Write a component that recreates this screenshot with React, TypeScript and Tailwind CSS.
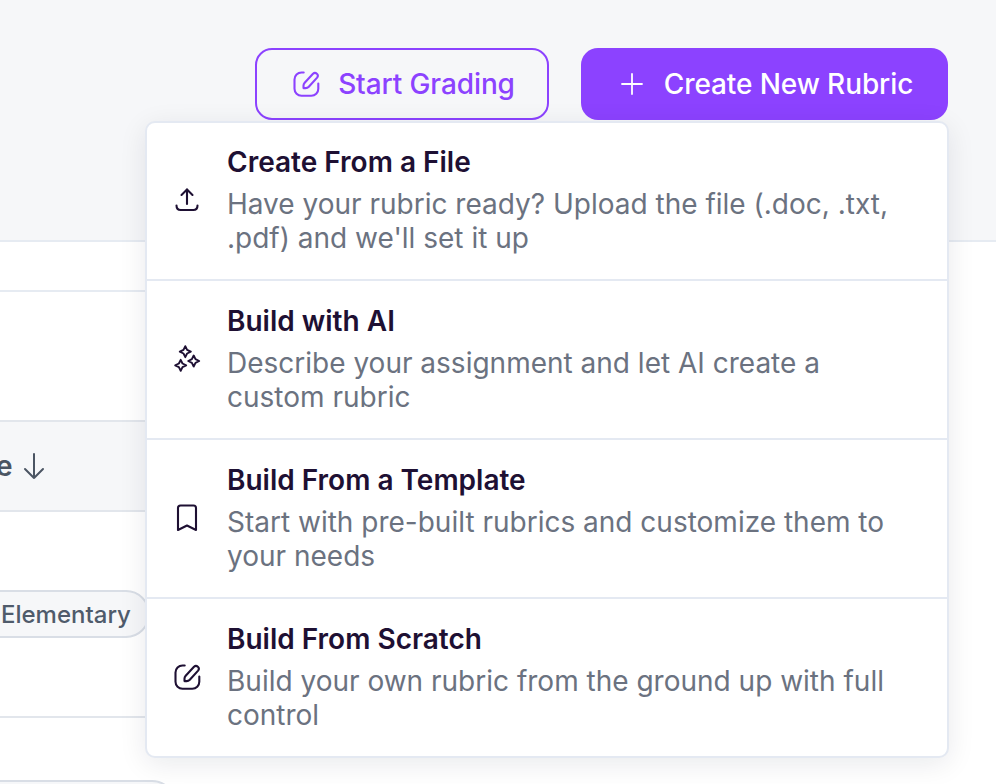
const PencilSquare = ({ className }: { className: string }) => (
  <svg viewBox="0 0 28 28" fill="none" stroke="currentColor" strokeWidth="2.100" strokeLinecap="round" strokeLinejoin="round" className={className}>
    <path d="M11.700 2.500H9.500a7 7 0 0 0-7 7v9.200a7 7 0 0 0 7 7h9.800a7 7 0 0 0 7-7V13.500" />
    <path d="M11.500 15.500c0-1 .5-2 1.200-2.800L21 3.800a2.800 2.800 0 0 1 4.100 3.800l-8.300 9.200c-.8.8-2 1.300-3.200 1.300h-2.100z" />
  </svg>
);

const UploadIcon = () => (
  <svg viewBox="0 0 26 26" fill="none" stroke="currentColor" strokeWidth="2.100" strokeLinecap="round" strokeLinejoin="round" className="h-[26px] w-[26px]">
    <path d="M13 17V2.500" />
    <path d="M7.500 8L13 2.500 18.500 8" />
    <path d="M2.500 18.500c0 2.800 1.700 4.500 4.200 4.500h12.600c2.500 0 4.200-1.700 4.200-4.500" />
  </svg>
);

const SparkIcon = () => (
  <svg viewBox="0 0 28 28" fill="none" stroke="currentColor" strokeWidth="1.900" strokeLinejoin="round" className="h-[28px] w-[28px]">
    <path d="M12.300 1.200l1.800 3.700 3.700 1.800-3.700 1.800-1.800 3.700-1.800-3.700-3.700-1.800 3.700-1.800z" />
    <path d="M20.700 10.500l1.800 3.700 3.700 1.800-3.700 1.800-1.800 3.700-1.800-3.700-3.700-1.800 3.700-1.800z" />
    <path d="M7.700 14.800l1.800 3.700 3.700 1.800-3.700 1.800-1.800 3.700-1.800-3.700-3.700-1.800 3.700-1.800z" />
  </svg>
);

const BookmarkIcon = () => (
  <svg viewBox="0 0 26 28" fill="none" stroke="currentColor" strokeWidth="2.100" strokeLinecap="round" strokeLinejoin="round" className="h-[28px] w-[26px]">
    <path d="M4 26V4a2.500 2.500 0 0 1 2.500-2.500h13A2.500 2.500 0 0 1 22 4v22l-9-4.500z" />
  </svg>
);

const items = [
  { title: "Create From a File", desc: "Have your rubric ready? Upload the file (.doc, .txt, .pdf) and we'll set it up", icon: <UploadIcon />, h: "h-[156px]" },
  { title: "Build with AI", desc: "Describe your assignment and let AI create a custom rubric", icon: <SparkIcon />, h: "h-[159px]" },
  { title: "Build From a Template", desc: "Start with pre-built rubrics and customize them to your needs", icon: <BookmarkIcon />, h: "h-[159px]" },
  { title: "Build From Scratch", desc: "Build your own rubric from the ground up with full control", icon: <PencilSquare className="h-[28px] w-[28px]" />, h: "h-[159px]" },
];

export default function App() {
  return (
    <div className="relative h-[784px] w-[996px] overflow-hidden bg-white font-['Inter',sans-serif]">
      <header className="flex h-[242px] justify-end gap-[32px] border-b-2 border-[#e6ebf2] bg-[#f6f7f9] pr-[48px] pt-[48px]">
        <button className="flex h-[72px] w-[294px] items-center justify-center gap-[18px] rounded-[17px] border-2 border-[#8c42ff] pl-[3px] text-[28px] font-[550] tracking-[-0.1px] text-[#8c42ff]">
          <PencilSquare className="h-[28px] w-[28px]" />
          Start Grading
        </button>
        <button className="flex h-[72px] w-[367px] items-center justify-center gap-[20px] rounded-[17px] bg-[#8c42ff] pl-[4px] text-[28px] font-[550] tracking-[-0.1px] text-white">
          <svg viewBox="0 0 24 24" fill="none" stroke="currentColor" strokeWidth="1.800" strokeLinecap="round" className="h-[24px] w-[24px]">
            <path d="M12 2v20M2 12h20" />
          </svg>
          Create New Rubric
        </button>
      </header>

      <main className="w-[948px] text-[#4b5563]">
        <div className="h-[50px] border-b-2 border-[#e6ebf2]" />
        <div className="h-[128px]" />
        <div className="flex h-[92px] items-center border-y-2 border-[#e2e6ec] bg-[#f6f7f9] text-[28px] font-semibold text-[#4b5563]">
          <span className="ml-[-4px]">e</span>
          <svg viewBox="0 0 24 28" fill="none" stroke="currentColor" strokeWidth="2" strokeLinecap="round" strokeLinejoin="round" className="ml-[9px] h-[28px] w-[24px]">
            <path d="M12 2v24M3 17l9 9 9-9" />
          </svg>
        </div>
        <div className="flex h-[206px] items-start border-b-2 border-[#e2e6ec] pt-[78px]">
          <span className="ml-[-31px] flex h-[48px] items-center rounded-full border-2 border-[#d9dee6] bg-[#f6f7f9] pl-[30px] pr-[17px] pt-[2px] text-[24px] font-medium text-[#4f5b6b]">
            Elementary
          </span>
        </div>
        <div className="pt-[62px]">
          <div className="ml-[-30px] h-[48px] w-[206px] rounded-full border-2 border-[#d9dee6] bg-[#f6f7f9]" />
        </div>
      </main>

      <div className="absolute left-[145px] top-[121px] w-[804px] overflow-hidden rounded-[10px] border-2 border-[#e4e9f2] bg-white shadow-[0_6px_28px_rgba(15,23,42,0.09)]">
        {items.map((it, i) => (
          <div key={it.title} className={`flex items-center pb-[2px] ${it.h} ${i > 0 ? "border-t-2 border-[#e4e9f2]" : ""}`}>
            <div className="flex w-[80px] shrink-0 justify-center text-[#1e1033]">{it.icon}</div>
            <div className="w-[680px]">
              <div className="text-[28px] font-semibold leading-[34px] text-[#1e1033]">{it.title}</div>
              <div className="mt-[8px] text-[28px] leading-[34px] text-[#6b7280]">{it.desc}</div>
            </div>
          </div>
        ))}
      </div>
    </div>
  );
}
